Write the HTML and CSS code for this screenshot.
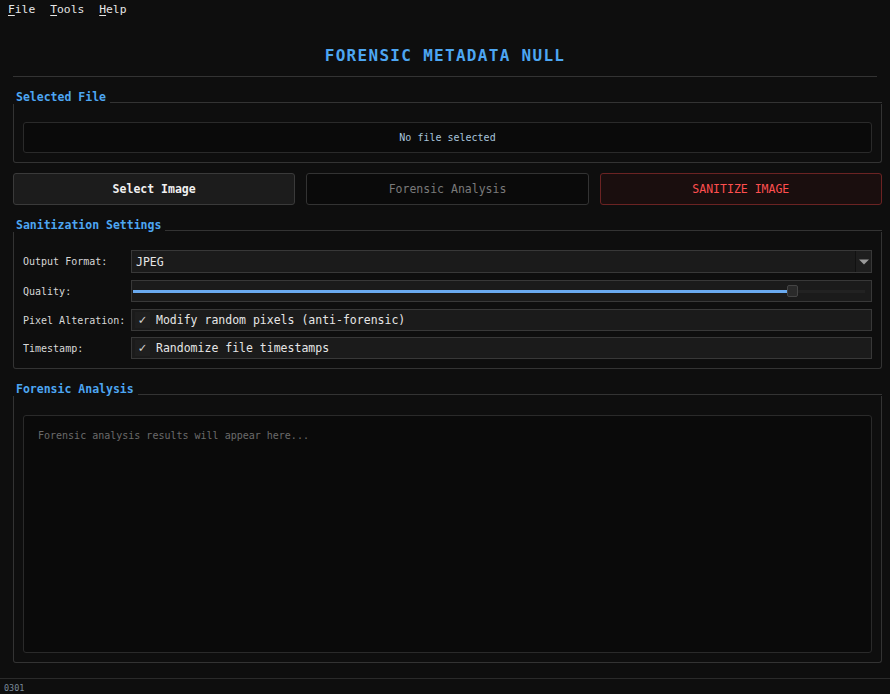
FILE: index.html
```html
<!DOCTYPE html>
<html>
<head>
<meta charset="utf-8">
<link rel="stylesheet" href="styles.css">
</head>
<body>
<div class="menubar">
  <span class="menu"><u>F</u>ile</span>
  <span class="menu"><u>T</u>ools</span>
  <span class="menu"><u>H</u>elp</span>
</div>
<div class="main">
  <div class="title">FORENSIC METADATA NULL</div>

  <div class="group g-file">
    <div class="group-head"><span class="group-title">Selected File</span><span class="group-line"></span></div>
    <div class="group-body body-file">
      <div class="file-label">No file selected</div>
    </div>
  </div>

  <div class="buttons">
    <div class="btn btn-select">Select Image</div>
    <div class="btn btn-analysis">Forensic Analysis</div>
    <div class="btn btn-sanitize">SANITIZE IMAGE</div>
  </div>

  <div class="group g-settings">
    <div class="group-head"><span class="group-title">Sanitization Settings</span><span class="group-line"></span></div>
    <div class="group-body body-settings">
      <div class="row r1">
        <span class="lbl">Output Format:</span>
        <div class="field combo"><span>JPEG</span><span class="arrow"><svg width="10" height="6" viewBox="0 0 10 6"><path d="M0 0.5 H10 L5 5.5 Z" fill="#9a9a9a"/></svg></span></div>
      </div>
      <div class="row r2">
        <span class="lbl">Quality:</span>
        <div class="field slider"><div class="groove"><div class="fill" style="width:655px"></div><div class="handle"></div></div></div>
      </div>
      <div class="row r3">
        <span class="lbl">Pixel Alteration:</span>
        <div class="field check"><span class="tick">✓</span><span>Modify random pixels (anti-forensic)</span></div>
      </div>
      <div class="row r4">
        <span class="lbl">Timestamp:</span>
        <div class="field check"><span class="tick">✓</span><span>Randomize file timestamps</span></div>
      </div>
    </div>
  </div>

  <div class="group g-analysis">
    <div class="group-head"><span class="group-title">Forensic Analysis</span><span class="group-line"></span></div>
    <div class="group-body body-analysis">
      <div class="results">Forensic analysis results will appear here...</div>
    </div>
  </div>
</div>
<div class="status">0301</div>
</body>
</html>
```
FILE: styles.css
```css
* { box-sizing: border-box; }
html, body { margin: 0; padding: 0; }
body {
  width: 890px;
  height: 694px;
  overflow: hidden;
  background: #0e0e0e;
  color: #dcdcdc;
  font-family: "DejaVu Sans Mono", "Liberation Mono", monospace;
  display: flex;
  flex-direction: column;
}
.menubar {
  height: 20px;
  display: flex;
  align-items: center;
  padding-left: 8px;
  padding-bottom: 2px;
  gap: 15px;
  font-size: 11.3px;
  color: #e6e6e6;
}
.menubar u { text-decoration-thickness: 1px; text-underline-offset: 2px; }
.main {
  flex: 1;
  display: flex;
  flex-direction: column;
  padding: 0 8px 0 13px;
}
.title {
  height: 57px;
  margin-right: 5px;
  border-bottom: 1px solid #333;
  display: flex;
  align-items: center;
  justify-content: center;
  padding-top: 14px;
  font-size: 16px;
  font-weight: bold;
  letter-spacing: 1.3px;
  color: #4da6f2;
}
.group { display: flex; flex-direction: column; }
.group-head {
  display: flex;
  align-items: flex-end;
  height: 17px;
}
.group-title {
  font-size: 11.5px;
  font-weight: bold;
  color: #4da6f2;
  padding-left: 3px;
  padding-right: 4px;
  line-height: 14px;
  position: relative;
  top: 1px;
}
.group-line {
  flex: 1;
  height: 1px;
  background: #333;
}
.group-body {
  border: 1px solid #333;
  border-top: none;
  border-radius: 0 0 3px 3px;
  margin-top: 1px;
  padding: 0 9px;
}
.g-file { margin-top: 9px; }
.body-file { height: 59px; padding-top: 18px; }
.file-label {
  height: 31px;
  background: #0a0a0a;
  border: 1px solid #2a2a2a;
  border-radius: 3px;
  display: flex;
  align-items: center;
  justify-content: center;
  font-size: 10px;
  color: #a8c4dc;
}
.buttons {
  display: flex;
  gap: 11px;
  margin-top: 10px;
  height: 32px;
}
.btn {
  flex: 1;
  border-radius: 3px;
  display: flex;
  align-items: center;
  justify-content: center;
  font-size: 11.5px;
}
.btn-select { background: #1c1c1c; border: 1px solid #3a3a3a; color: #f0f0f0; font-weight: bold; }
.btn-analysis { background: #0a0a0a; border: 1px solid #333; color: #7a7a7a; }
.btn-sanitize { background: #1a0e0e; border: 1px solid #6b2323; color: #ff4f4f; }

.g-settings { margin-top: 9px; }
.body-settings { height: 137px; padding-top: 18px; display: flex; flex-direction: column; }
.row { display: flex; align-items: center; }
.r1 { height: 23px; }
.r2 { height: 22px; margin-top: 7px; }
.r3 { height: 22px; margin-top: 7px; }
.r4 { height: 22px; margin-top: 6px; }
.lbl { width: 108px; font-size: 10px; color: #d8d8d8; }
.field {
  flex: 1;
  height: 100%;
  background: #1b1b1b;
  border: 1px solid #383838;
  display: flex;
  align-items: center;
}
.combo { padding-left: 4px; font-size: 11.5px; color: #e6e6e6; justify-content: space-between; }
.arrow {
  width: 16px;
  height: 21px;
  display: flex;
  align-items: center;
  justify-content: center;
  background: #1e1e1e;
  border-left: 1px solid #111;
}
.slider { padding: 0 1px; }
.groove {
  flex: 1;
  height: 3px;
  background: #222;
  position: relative;
  margin-right: 5px;
}
.fill { height: 3px; background: #6aaaf0; }
.handle {
  position: absolute;
  left: 654px;
  top: -5px;
  width: 11px;
  height: 12px;
  border-radius: 2px;
  background: #2a2a2a;
  border: 1px solid #444;
}
.check { font-size: 11.5px; color: #e6e6e6; padding-left: 3px; }
.tick {
  width: 15px;
  height: 16px;
  line-height: 16px;
  color: #d0d0d0;
  font-size: 13px;
  font-weight: bold;
  margin-right: 6px;
  background: #1f1f1f;
  text-align: center;
}

.g-analysis { margin-top: 9px; }
.body-analysis { height: 267px; padding-top: 19px; padding-bottom: 9px; }
.results {
  height: 100%;
  background: #0a0a0a;
  border: 1px solid #2a2a2a;
  border-radius: 3px;
  padding: 14px 14px;
  font-size: 10px;
  color: #6a6a6a;
}
.status {
  height: 16px;
  border-top: 1px solid #2a2a2a;
  font-size: 8.5px;
  color: #7a8a9a;
  padding-left: 4px;
  padding-top: 4px;
  flex-shrink: 0;
}
```
